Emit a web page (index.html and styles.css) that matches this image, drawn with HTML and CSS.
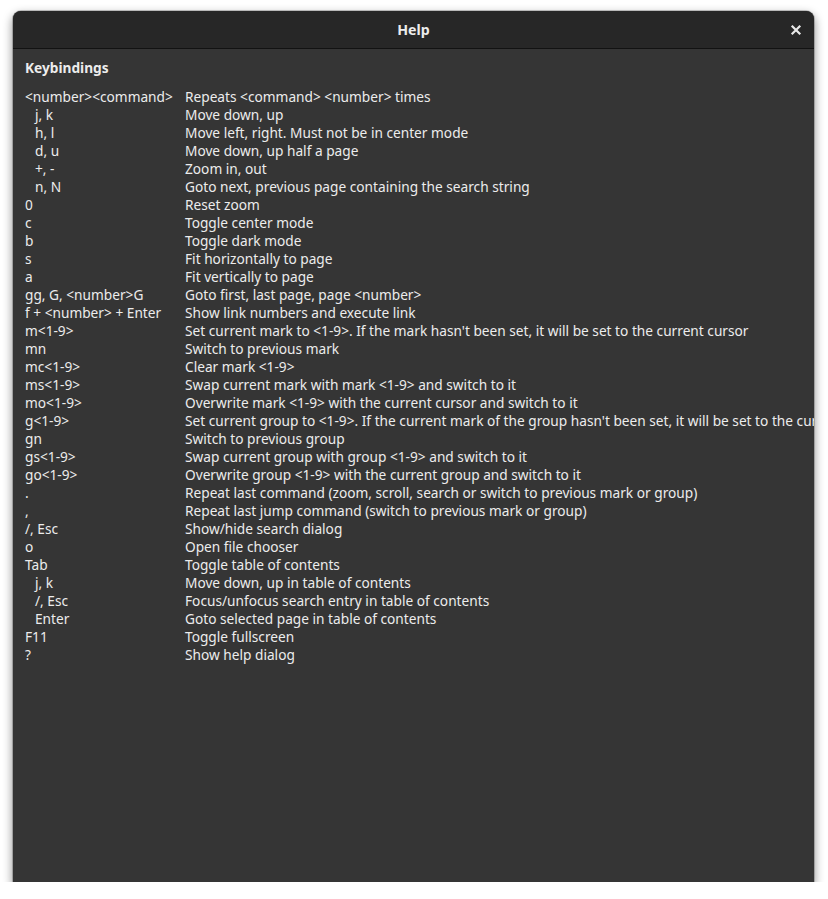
FILE: index.html
```html
<!DOCTYPE html>
<html>
<head>
<meta charset="utf-8">
<link rel="stylesheet" href="styles.css">
</head>
<body>
<div class="window">
  <div class="headerbar">
    <div class="title">Help</div>
    <div class="close">
      <svg width="12" height="12" viewBox="0 0 12 12"><path d="M2.5 2.5 L9.5 9.5 M9.5 2.5 L2.5 9.5" stroke="#e8e8e8" stroke-width="2.2" stroke-linecap="square"/></svg>
    </div>
  </div>
  <div class="content">
    <div class="heading">Keybindings</div>
    <div class="table">
      <div class="key">&lt;number&gt;&lt;command&gt;</div><div class="desc">Repeats &lt;command&gt; &lt;number&gt; times</div>
      <div class="key indent">j, k</div><div class="desc">Move down, up</div>
      <div class="key indent">h, l</div><div class="desc">Move left, right. Must not be in center mode</div>
      <div class="key indent">d, u</div><div class="desc">Move down, up half a page</div>
      <div class="key indent">+, -</div><div class="desc">Zoom in, out</div>
      <div class="key indent">n, N</div><div class="desc">Goto next, previous page containing the search string</div>
      <div class="key">0</div><div class="desc">Reset zoom</div>
      <div class="key">c</div><div class="desc">Toggle center mode</div>
      <div class="key">b</div><div class="desc">Toggle dark mode</div>
      <div class="key">s</div><div class="desc">Fit horizontally to page</div>
      <div class="key">a</div><div class="desc">Fit vertically to page</div>
      <div class="key">gg, G, &lt;number&gt;G</div><div class="desc">Goto first, last page, page &lt;number&gt;</div>
      <div class="key">f + &lt;number&gt; + Enter</div><div class="desc">Show link numbers and execute link</div>
      <div class="key">m&lt;1-9&gt;</div><div class="desc">Set current mark to &lt;1-9&gt;. If the mark hasn't been set, it will be set to the current cursor</div>
      <div class="key">mn</div><div class="desc">Switch to previous mark</div>
      <div class="key">mc&lt;1-9&gt;</div><div class="desc">Clear mark &lt;1-9&gt;</div>
      <div class="key">ms&lt;1-9&gt;</div><div class="desc">Swap current mark with mark &lt;1-9&gt; and switch to it</div>
      <div class="key">mo&lt;1-9&gt;</div><div class="desc">Overwrite mark &lt;1-9&gt; with the current cursor and switch to it</div>
      <div class="key">g&lt;1-9&gt;</div><div class="desc">Set current group to &lt;1-9&gt;. If the current mark of the group hasn't been set, it will be set to the current cursor</div>
      <div class="key">gn</div><div class="desc">Switch to previous group</div>
      <div class="key">gs&lt;1-9&gt;</div><div class="desc">Swap current group with group &lt;1-9&gt; and switch to it</div>
      <div class="key">go&lt;1-9&gt;</div><div class="desc">Overwrite group &lt;1-9&gt; with the current group and switch to it</div>
      <div class="key">.</div><div class="desc">Repeat last command (zoom, scroll, search or switch to previous mark or group)</div>
      <div class="key">,</div><div class="desc">Repeat last jump command (switch to previous mark or group)</div>
      <div class="key">/, Esc</div><div class="desc">Show/hide search dialog</div>
      <div class="key">o</div><div class="desc">Open file chooser</div>
      <div class="key">Tab</div><div class="desc">Toggle table of contents</div>
      <div class="key indent">j, k</div><div class="desc">Move down, up in table of contents</div>
      <div class="key indent">/, Esc</div><div class="desc">Focus/unfocus search entry in table of contents</div>
      <div class="key indent">Enter</div><div class="desc">Goto selected page in table of contents</div>
      <div class="key">F11</div><div class="desc">Toggle fullscreen</div>
      <div class="key">?</div><div class="desc">Show help dialog</div>
    </div>
  </div>
</div>
</body>
</html>
```

FILE: styles.css
```css
html, body {
  margin: 0;
  padding: 0;
  background: #ffffff;
}
body {
  padding: 11px 14px 0 13px;
  font-family: "Noto Sans", "Open Sans", sans-serif;
  font-size: 13.7px;
  color: #ececec;
}
.window {
  width: 801px;
  height: 871px;
  background: #353535;
  border-radius: 8px 8px 0 0;
  overflow: hidden;
  box-shadow: 0 4px 10px 1px rgba(0, 0, 0, 0.4), 0 0 0 1px rgba(0, 0, 0, 0.2);
  display: flex;
  flex-direction: column;
}
.headerbar {
  height: 37px;
  flex: none;
  background: #272727;
  border-bottom: 1px solid #121212;
  display: flex;
  align-items: center;
  justify-content: center;
  position: relative;
}
.title {
  font-weight: bold;
  font-size: 14.2px;
  color: #ececec;
}
.close {
  position: absolute;
  right: 12px;
  top: 13px;
  width: 12px;
  height: 12px;
  display: flex;
}
.content {
  padding: 10px 0 0 12px;
  white-space: nowrap;
}
.heading {
  font-weight: bold;
  line-height: 18px;
  margin-bottom: 11px;
}
.table {
  display: grid;
  grid-template-columns: 160px auto;
  line-height: 18px;
}
.indent {
  padding-left: 10px;
}
```
